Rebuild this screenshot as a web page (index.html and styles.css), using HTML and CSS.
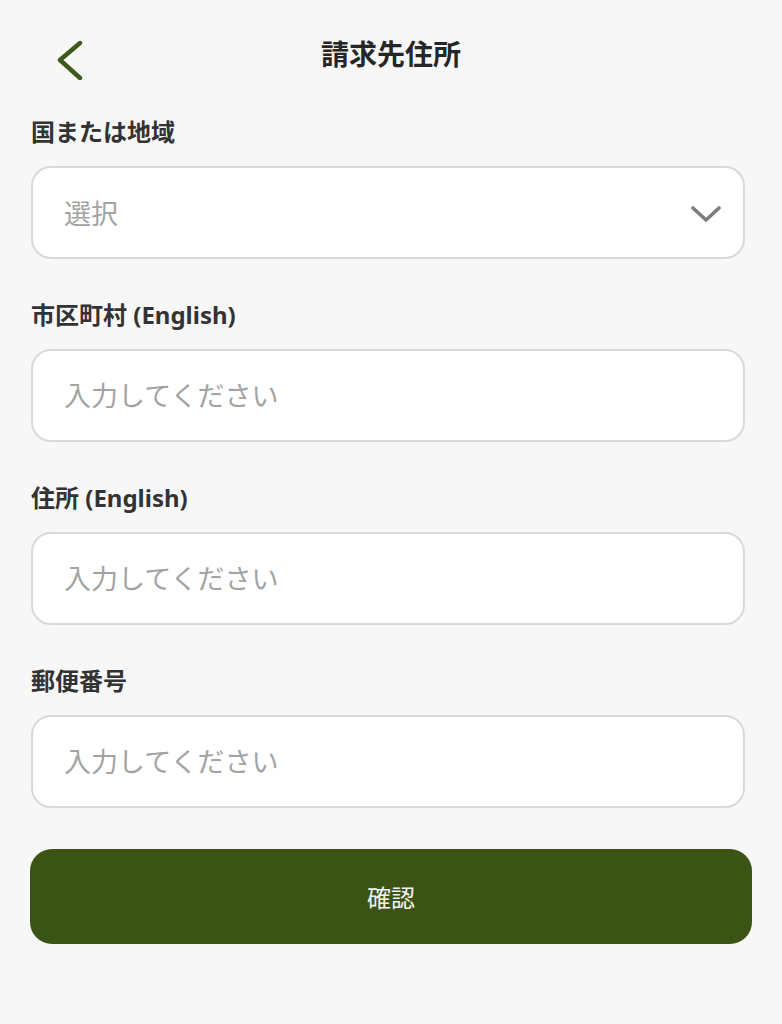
FILE: index.html
```html
<!DOCTYPE html>
<html lang="ja">
<head>
<meta charset="utf-8">
<title>請求先住所</title>
<link rel="stylesheet" href="styles.css">
</head>
<body>
<div class="page">
  <header class="header">
    <button class="back" aria-label="戻る">
      <svg width="30" height="40" viewBox="0 0 30 40"><path d="M25 3 L5 20 L25 38" fill="none" stroke="#3d5a1a" stroke-width="4.4" stroke-linecap="round" stroke-linejoin="round"/></svg>
    </button>
    <h1 class="title">請求先住所</h1>
    <div></div>
  </header>
  <form class="form">
    <div class="field">
      <label class="label">国または地域</label>
      <div class="select">
        <span class="placeholder">選択</span>
        <svg class="caret" width="30" height="18" viewBox="0 0 30 18"><path d="M2 3 L15 15 L28 3" fill="none" stroke="#7d7d7d" stroke-width="3.6" stroke-linecap="round" stroke-linejoin="round"/></svg>
      </div>
    </div>
    <div class="field">
      <label class="label">市区町村 (English)</label>
      <input class="input" type="text" placeholder="入力してください">
    </div>
    <div class="field">
      <label class="label">住所 (English)</label>
      <input class="input" type="text" placeholder="入力してください">
    </div>
    <div class="field">
      <label class="label">郵便番号</label>
      <input class="input" type="text" placeholder="入力してください">
    </div>
    <button class="submit" type="button">確認</button>
  </form>
</div>
</body>
</html>
```
FILE: styles.css
```css
* { box-sizing: border-box; }
html, body {
  margin: 0;
  padding: 0;
  background: #f7f7f7;
}
body {
  font-family: "Noto Sans", "Noto Sans CJK JP", sans-serif;
  color: #2b2b2b;
}
.page {
  width: 782px;
  min-height: 1024px;
}
.header {
  height: 106px;
  display: grid;
  grid-template-columns: 1fr auto 1fr;
  align-items: center;
}
.back {
  justify-self: start;
  align-self: start;
  margin: 40px 0 0 55px;
  padding: 0;
  border: 0;
  background: none;
  width: 30px;
  height: 40px;
  display: block;
}
.back svg { display: block; }
.title {
  margin: 2px 0 0;
  font-size: 28px;
  font-weight: 700;
  color: #262626;
  line-height: 36px;
}
.form {
  padding: 10px 37px 0 31px;
  display: flex;
  flex-direction: column;
  gap: 40px;
}
.field {
  display: flex;
  flex-direction: column;
  gap: 18px;
}
.label {
  font-size: 24px;
  font-weight: 700;
  line-height: 32px;
  color: #333;
}
.select, .input {
  width: 100%;
  height: 93px;
  background: #fff;
  border: 2px solid #d9d9d9;
  border-radius: 20px;
  padding: 0 22px 0 31px;
  font-family: inherit;
  font-size: 27px;
  color: #333;
}
.select {
  display: flex;
  align-items: center;
  justify-content: space-between;
}
.placeholder { color: #a3a3a3; }
.caret { display: block; margin-top: 2px; }
.input::placeholder { color: #a3a3a3; opacity: 1; }
.input:focus { outline: none; }
.submit {
  margin: 1px -7px 0 -1px;
  height: 95px;
  border: 0;
  border-radius: 22px;
  background: #3b5416;
  color: #f2f2f2;
  font-family: inherit;
  font-size: 24px;
  font-weight: 400;
}
```
